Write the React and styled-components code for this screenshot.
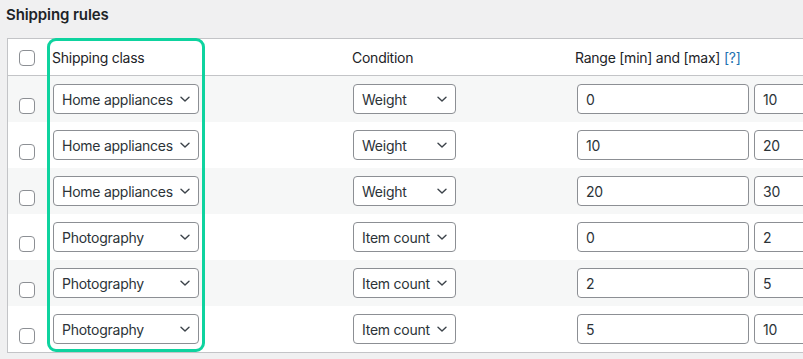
import styled, { createGlobalStyle } from "styled-components";

const rules = [
  { cls: "Home appliances", cond: "Weight", min: "0", max: "10" },
  { cls: "Home appliances", cond: "Weight", min: "10", max: "20" },
  { cls: "Home appliances", cond: "Weight", min: "20", max: "30" },
  { cls: "Photography", cond: "Item count", min: "0", max: "2" },
  { cls: "Photography", cond: "Item count", min: "2", max: "5" },
  { cls: "Photography", cond: "Item count", min: "5", max: "10" },
];

function Chevron() {
  return (
    <svg width="12" height="12" viewBox="0 0 12 12" fill="none">
      <path d="M2 4.2 L6 8 L10 4.2" stroke="#3c434a" strokeWidth="1.4" strokeLinecap="round" strokeLinejoin="round" />
    </svg>
  );
}

function App() {
  return (
    <>
      <GlobalStyle />
      <Page>
        <Title>Shipping rules</Title>
        <TableWrap>
          <Highlight />
          <HeadRow>
            <CheckCell>
              <Checkbox />
            </CheckCell>
            <HeadCell>Shipping class</HeadCell>
            <HeadCell>Condition</HeadCell>
            <HeadCell>
              Range [min] and [max] <Help>[?]</Help>
            </HeadCell>
          </HeadRow>
          {rules.map((r, i) => (
            <Row key={i} $striped={i % 2 === 0}>
              <CheckCell $body>
                <Checkbox />
              </CheckCell>
              <Cell>
                <Select $width={146}>
                  <span>{r.cls}</span>
                  <Chevron />
                </Select>
              </Cell>
              <Cell>
                <Select $width={103}>
                  <span>{r.cond}</span>
                  <Chevron />
                </Select>
              </Cell>
              <Cell>
                <RangeBox>
                  <Input>{r.min}</Input>
                  <Input>{r.max}</Input>
                </RangeBox>
              </Cell>
            </Row>
          ))}
        </TableWrap>
      </Page>
    </>
  );
}

export default App;

const GlobalStyle = createGlobalStyle`
  html, body {
    margin: 0;
    padding: 0;
    background: #f0f0f1;
    overflow: hidden;
  }
  body {
    font-family: Inter, "Noto Sans", sans-serif;
    font-size: 14px;
    letter-spacing: -0.25px;
    color: #1d2327;
  }
`;

const Page = styled.div`
  width: 803px;
  height: 359px;
  overflow: hidden;
`;

const Title = styled.h2`
  margin: 0;
  padding: 5px 0 0 6px;
  height: 38px;
  box-sizing: border-box;
  font-size: 15px;
  font-weight: 600;
  letter-spacing: -0.1px;
  color: #1d2327;
`;

const TableWrap = styled.div`
  position: relative;
  margin-left: 7px;
  width: 900px;
  background: #fff;
  border: 1px solid #c3c4c7;
`;

const Highlight = styled.div`
  position: absolute;
  left: 39px;
  top: -1px;
  width: 158px;
  height: 314px;
  box-sizing: border-box;
  border: 3px solid #0ed39f;
  border-radius: 9px;
  pointer-events: none;
`;

const cols = "37px 300px 223px 1fr";

const HeadRow = styled.div`
  display: grid;
  grid-template-columns: ${cols};
  align-items: center;
  height: 36px;
  border-bottom: 1px solid #c3c4c7;
`;

const Row = styled.div`
  display: grid;
  grid-template-columns: ${cols};
  align-items: center;
  height: 46px;
  background: ${(p) => (p.$striped ? "#f6f7f7" : "#fff")};
`;

const CheckCell = styled.div`
  padding-left: 11px;
  align-self: ${(p) => (p.$body ? "start" : "center")};
  padding-top: ${(p) => (p.$body ? "22px" : "1px")};
`;

const Checkbox = styled.div`
  width: 16px;
  height: 16px;
  box-sizing: border-box;
  border: 1px solid #8c8f94;
  border-radius: 4px;
  background: #fff;
`;

const HeadCell = styled.div`
  padding-left: 7px;
  color: #1d2327;
  white-space: nowrap;
`;

const Help = styled.span`
  color: #2271b1;
`;

const Cell = styled.div`
  padding-left: 8px;
  display: flex;
  align-items: center;
`;

const Select = styled.div`
  width: ${(p) => p.$width}px;
  height: 30px;
  box-sizing: border-box;
  border: 1px solid #8c8f94;
  border-radius: 4px;
  background: #fff;
  display: flex;
  align-items: center;
  justify-content: space-between;
  padding: 0 7px 0 8px;
  color: #2c3338;
  white-space: nowrap;
`;

const RangeBox = styled.div`
  display: flex;
  gap: 5px;
  padding-left: 1px;
`;

const Input = styled.div`
  width: 172px;
  height: 30px;
  box-sizing: border-box;
  border: 1px solid #8c8f94;
  border-radius: 4px;
  background: #fff;
  display: flex;
  align-items: center;
  padding-left: 8px;
  color: #2c3338;
`;
